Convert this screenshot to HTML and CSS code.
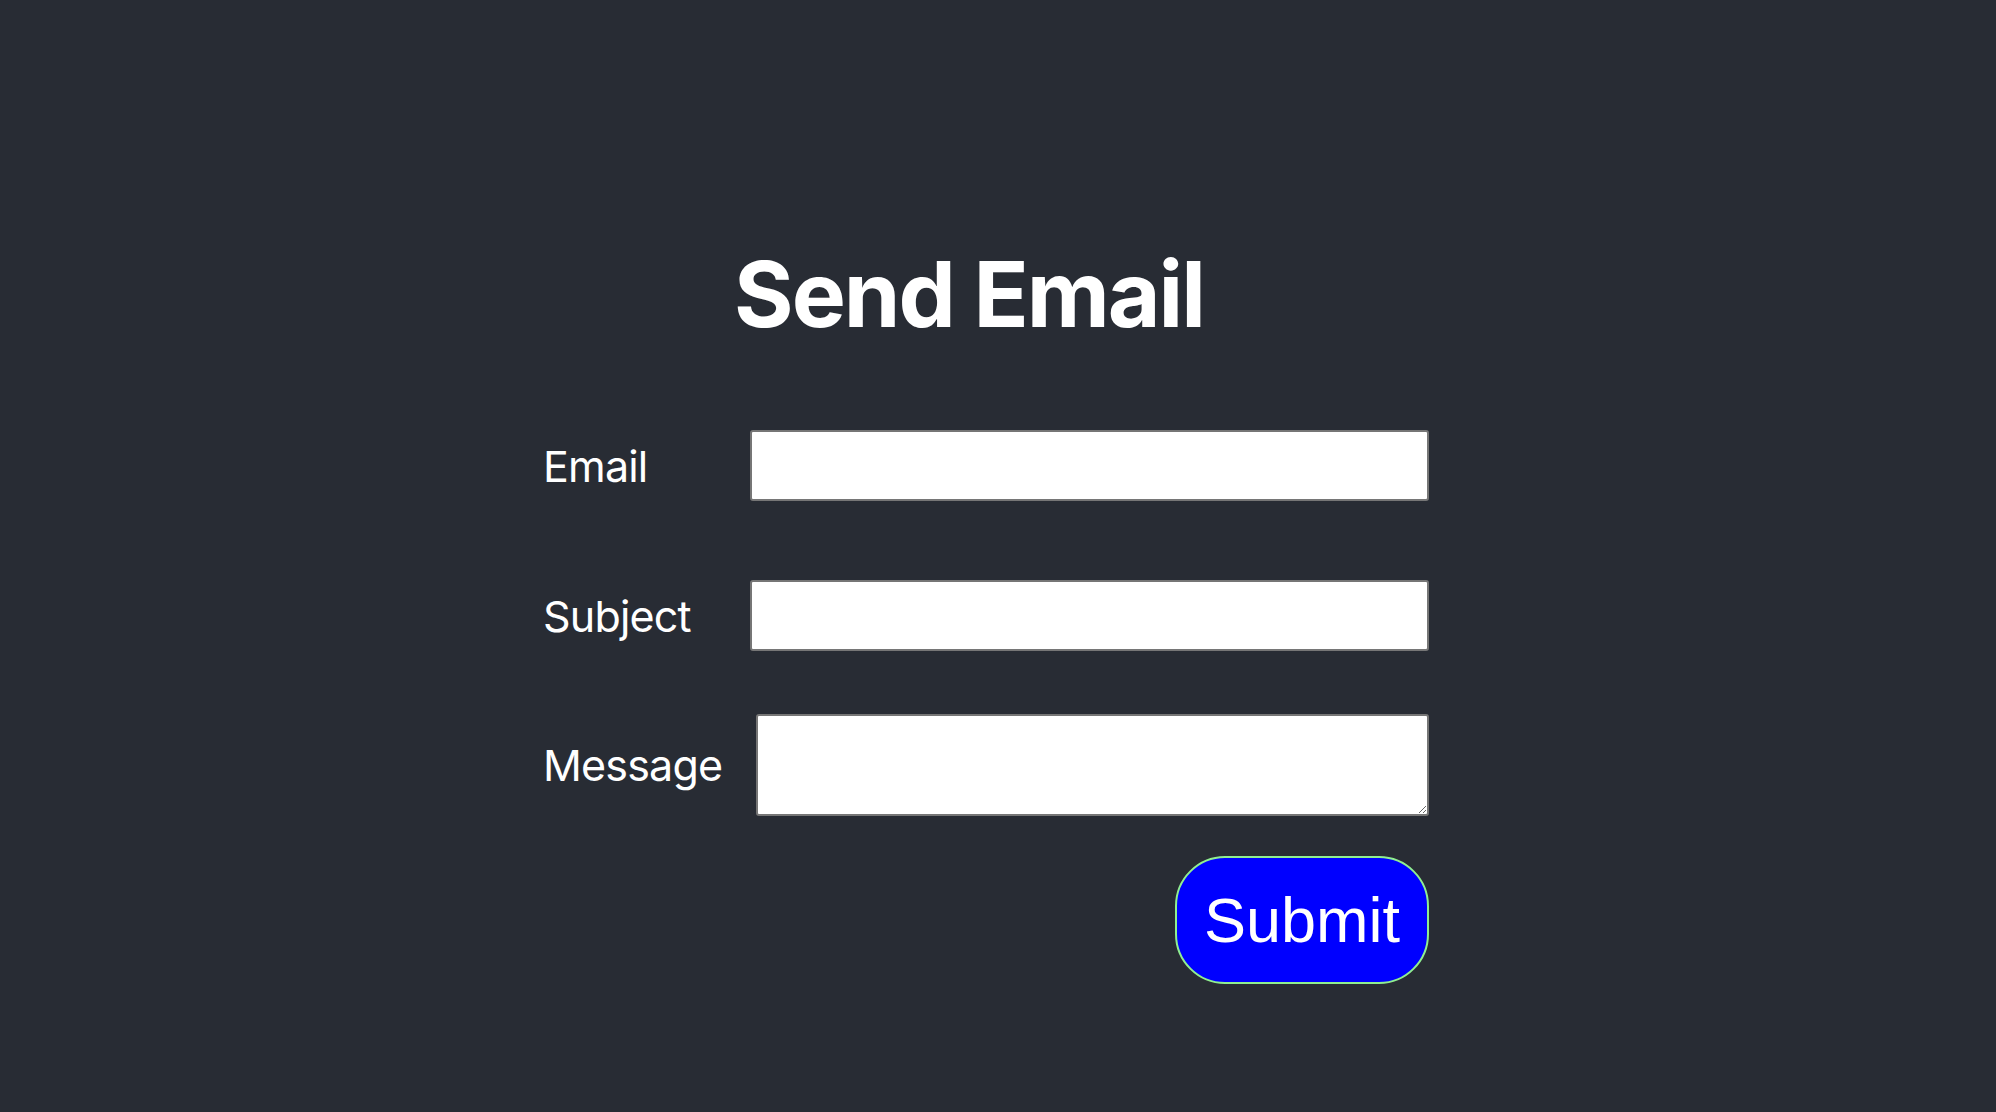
FILE: index.html
```html
<!DOCTYPE html>
<html lang="en">
<head>
<meta charset="utf-8">
<title>Send Email</title>
<link rel="stylesheet" href="styles.css">
</head>
<body>
<main class="page">
  <div class="panel">
    <h1 class="title">Send Email</h1>
    <form class="form">
      <div class="row row-email">
        <label class="label" for="email">Email</label>
        <input class="field" id="email" type="email">
      </div>
      <div class="row row-subject">
        <label class="label" for="subject">Subject</label>
        <input class="field" id="subject" type="text">
      </div>
      <div class="row row-message">
        <label class="label" for="message">Message</label>
        <textarea class="field area" id="message"></textarea>
      </div>
      <div class="actions">
        <button class="submit" type="submit">Submit</button>
      </div>
    </form>
  </div>
</main>
</body>
</html>
```
FILE: styles.css
```css
html, body {
  margin: 0;
  padding: 0;
  background: #282c34;
  height: 100%;
}
.page {
  min-height: 100vh;
  display: flex;
  justify-content: center;
  align-items: flex-start;
  padding-top: 239px;
  box-sizing: border-box;
}
.panel {
  width: 884px;
  margin-right: 22px;
  display: flex;
  flex-direction: column;
}
.title {
  margin: 0 0 81px;
  padding-right: 36px;
  text-align: center;
  font-family: Inter, "Liberation Sans", sans-serif;
  font-weight: 700;
  font-size: 91px;
  letter-spacing: -2px;
  line-height: normal;
  color: #ffffff;
}
.form {
  display: flex;
  flex-direction: column;
}
.row {
  display: flex;
  align-items: center;
}
.row-email { margin-bottom: 79px; }
.row-subject { margin-bottom: 63px; }
.row-message { margin-bottom: 40px; }
.label {
  min-width: 173px;
  flex-shrink: 0;
  margin-left: -2px;
  margin-right: 34px;
  font-family: Inter, "Liberation Sans", sans-serif;
  font-size: 43px;
  letter-spacing: -0.8px;
  color: #ffffff;
}
.field {
  flex: 1;
  height: 71px;
  box-sizing: border-box;
  border: 2px solid #767676;
  border-radius: 3px;
  background: #ffffff;
  margin: 0;
  padding: 2px 8px;
  font-family: "Liberation Sans", sans-serif;
  font-size: 20px;
}
.area {
  height: 102px;
}
.actions {
  display: flex;
  justify-content: flex-end;
}
.submit {
  font-family: "Liberation Sans", Arial, sans-serif;
  font-size: 63px;
  line-height: 72px;
  padding: 26px 27px;
  border: 2px solid #90ee90;
  border-radius: 50px;
  background: #0000ff;
  color: #ffffff;
  margin: 0;
}
```
